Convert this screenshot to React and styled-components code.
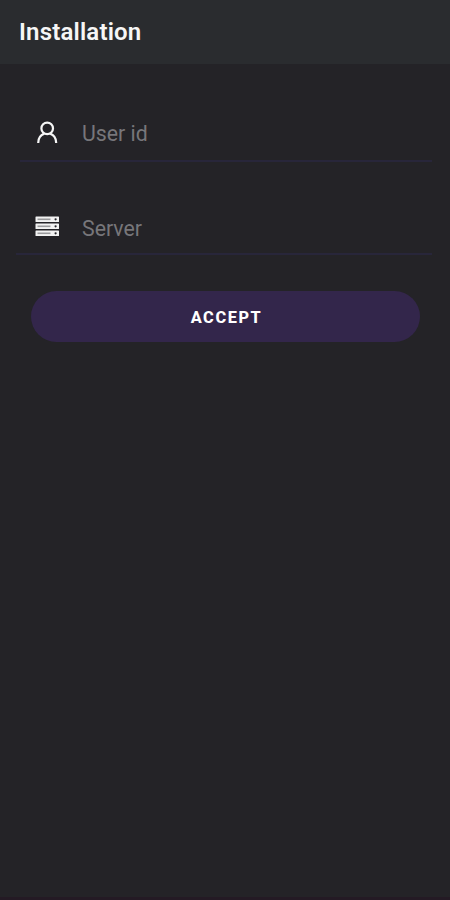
import styled, { createGlobalStyle } from 'styled-components'

let GlobalStyle = createGlobalStyle`
* { box-sizing: border-box; }
body {
margin: 0;
background-color: #242327;
font-family: Roboto, "Liberation Sans", sans-serif;
}
`;

let Screen = styled.div`
display: flex;
flex-direction: column;
height: 900px;
background-color: #242327;
border-bottom: 3px solid #241a24;
overflow: hidden;
`;

let TopBar = styled.header`
height: 64px;
flex-shrink: 0;
display: flex;
align-items: center;
padding-left: 19px;
background-color: #2a2c2f;
`;

let Title = styled.h1`
margin: 0;
color: #f6f6f6;
font-size: 24px;
line-height: 28px;
font-weight: 600;
letter-spacing: 0.18px;
`;

let Form = styled.form`
display: flex;
flex-direction: column;
padding-top: 40px;
`;

let Field = styled.label`
display: flex;
align-items: center;
height: 58px;
margin-top: ${props => props.top};
margin-left: ${props => props.left};
margin-right: 18px;
padding-left: ${props => props.inset};
border-bottom: 2px solid #28263a;
`;

let IconBox = styled.span`
display: flex;
width: 24px;
height: 24px;
margin-right: 23px;
`;

let Hint = styled.span`
padding-top: ${props => props.drop};
color: #77767a;
font-size: 21.3px;
line-height: 26px;
`;

let AcceptButton = styled.button`
height: 51px;
margin: 36px 30px 0 31px;
padding: 1px 0 0 2px;
border: none;
border-radius: 26px;
background-color: #33264b;
color: #fff;
font-family: inherit;
font-size: 16.3px;
font-weight: 800;
letter-spacing: 1.6px;
`;

function UserIcon() {
    return <svg width="24" height="24" viewBox="0 0 24 24" fill="none" stroke="#f6f6f6" strokeWidth="2.2">
        <circle cx="12.2" cy="8.4" r="5.8" />
        <path d="M3.2 23c0-4.6 2.4-8 6-9.4M21.2 23c0-4.6-2.4-8-6-9.4" />
    </svg>
}

function ServerIcon() {
    return <svg width="24" height="24" viewBox="0 0 24 24">
        {[3.5, 10.5, 17.5].map(y => <g key={y}>
            <rect x="0.5" y={y} width="23.5" height="5.6" rx="0.6" fill="#f2f2f2" />
            <rect x="2.5" y={y + 2} width="13" height="1.6" fill="#99999b" />
            <circle cx="20.6" cy={y + 2.8} r="1.1" fill="#252429" />
        </g>)}
    </svg>
}

export default function App() {
    return <>
        <GlobalStyle />
        <Screen>
            <TopBar>
                <Title>Installation</Title>
            </TopBar>
            <Form onSubmit={e => e.preventDefault()}>
                <Field top="0" left="20px" inset="15px">
                    <IconBox><UserIcon /></IconBox>
                    <Hint drop="4px">User id</Hint>
                </Field>
                <Field top="35px" left="16px" inset="19px">
                    <IconBox><ServerIcon /></IconBox>
                    <Hint drop="7px">Server</Hint>
                </Field>
                <AcceptButton type="submit">ACCEPT</AcceptButton>
            </Form>
        </Screen>
    </>
}
